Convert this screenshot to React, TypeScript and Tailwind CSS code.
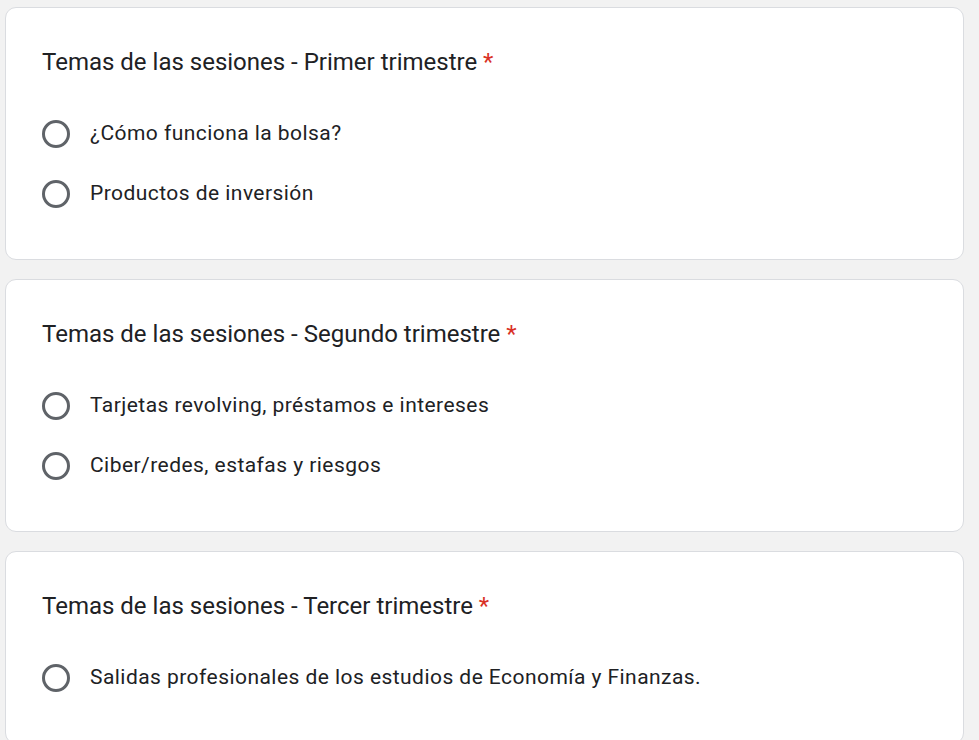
import React from 'react';

const sections = [
  {
    title: 'Temas de las sesiones - Primer trimestre',
    options: ['¿Cómo funciona la bolsa?', 'Productos de inversión'],
  },
  {
    title: 'Temas de las sesiones - Segundo trimestre',
    options: ['Tarjetas revolving, préstamos e intereses', 'Ciber/redes, estafas y riesgos'],
  },
  {
    title: 'Temas de las sesiones - Tercer trimestre',
    options: ['Salidas profesionales de los estudios de Economía y Finanzas.'],
  },
];

function Radio() {
  return (
    <span className="w-[28px] h-[28px] rounded-full border-[3px] border-[#5f6368] shrink-0" />
  );
}

export default function App() {
  return (
    <div
      className="min-h-screen bg-[#f2f2f2] pt-[7px] pl-[5px] pr-[15px] pb-[20px] flex flex-col gap-[19px]"
      style={{ fontFamily: 'Roboto, "Liberation Sans", sans-serif' }}
    >
      {sections.map((s) => (
        <div
          key={s.title}
          className="bg-white border border-[#dadce0] rounded-[11px] pl-[36px] pr-6 pt-[40px] pb-[35px]"
        >
          <div className="text-[24px] leading-[28px] text-[#202124]">
            {s.title} <span className="text-[#d93025]">*</span>
          </div>
          <div className="mt-[28px] flex flex-col">
            {s.options.map((o) => (
              <label key={o} className="h-[60px] flex items-center gap-[20px] cursor-pointer">
                <Radio />
                <span className="text-[21px] tracking-[0.45px] text-[#202124]">{o}</span>
              </label>
            ))}
          </div>
        </div>
      ))}
    </div>
  );
}
